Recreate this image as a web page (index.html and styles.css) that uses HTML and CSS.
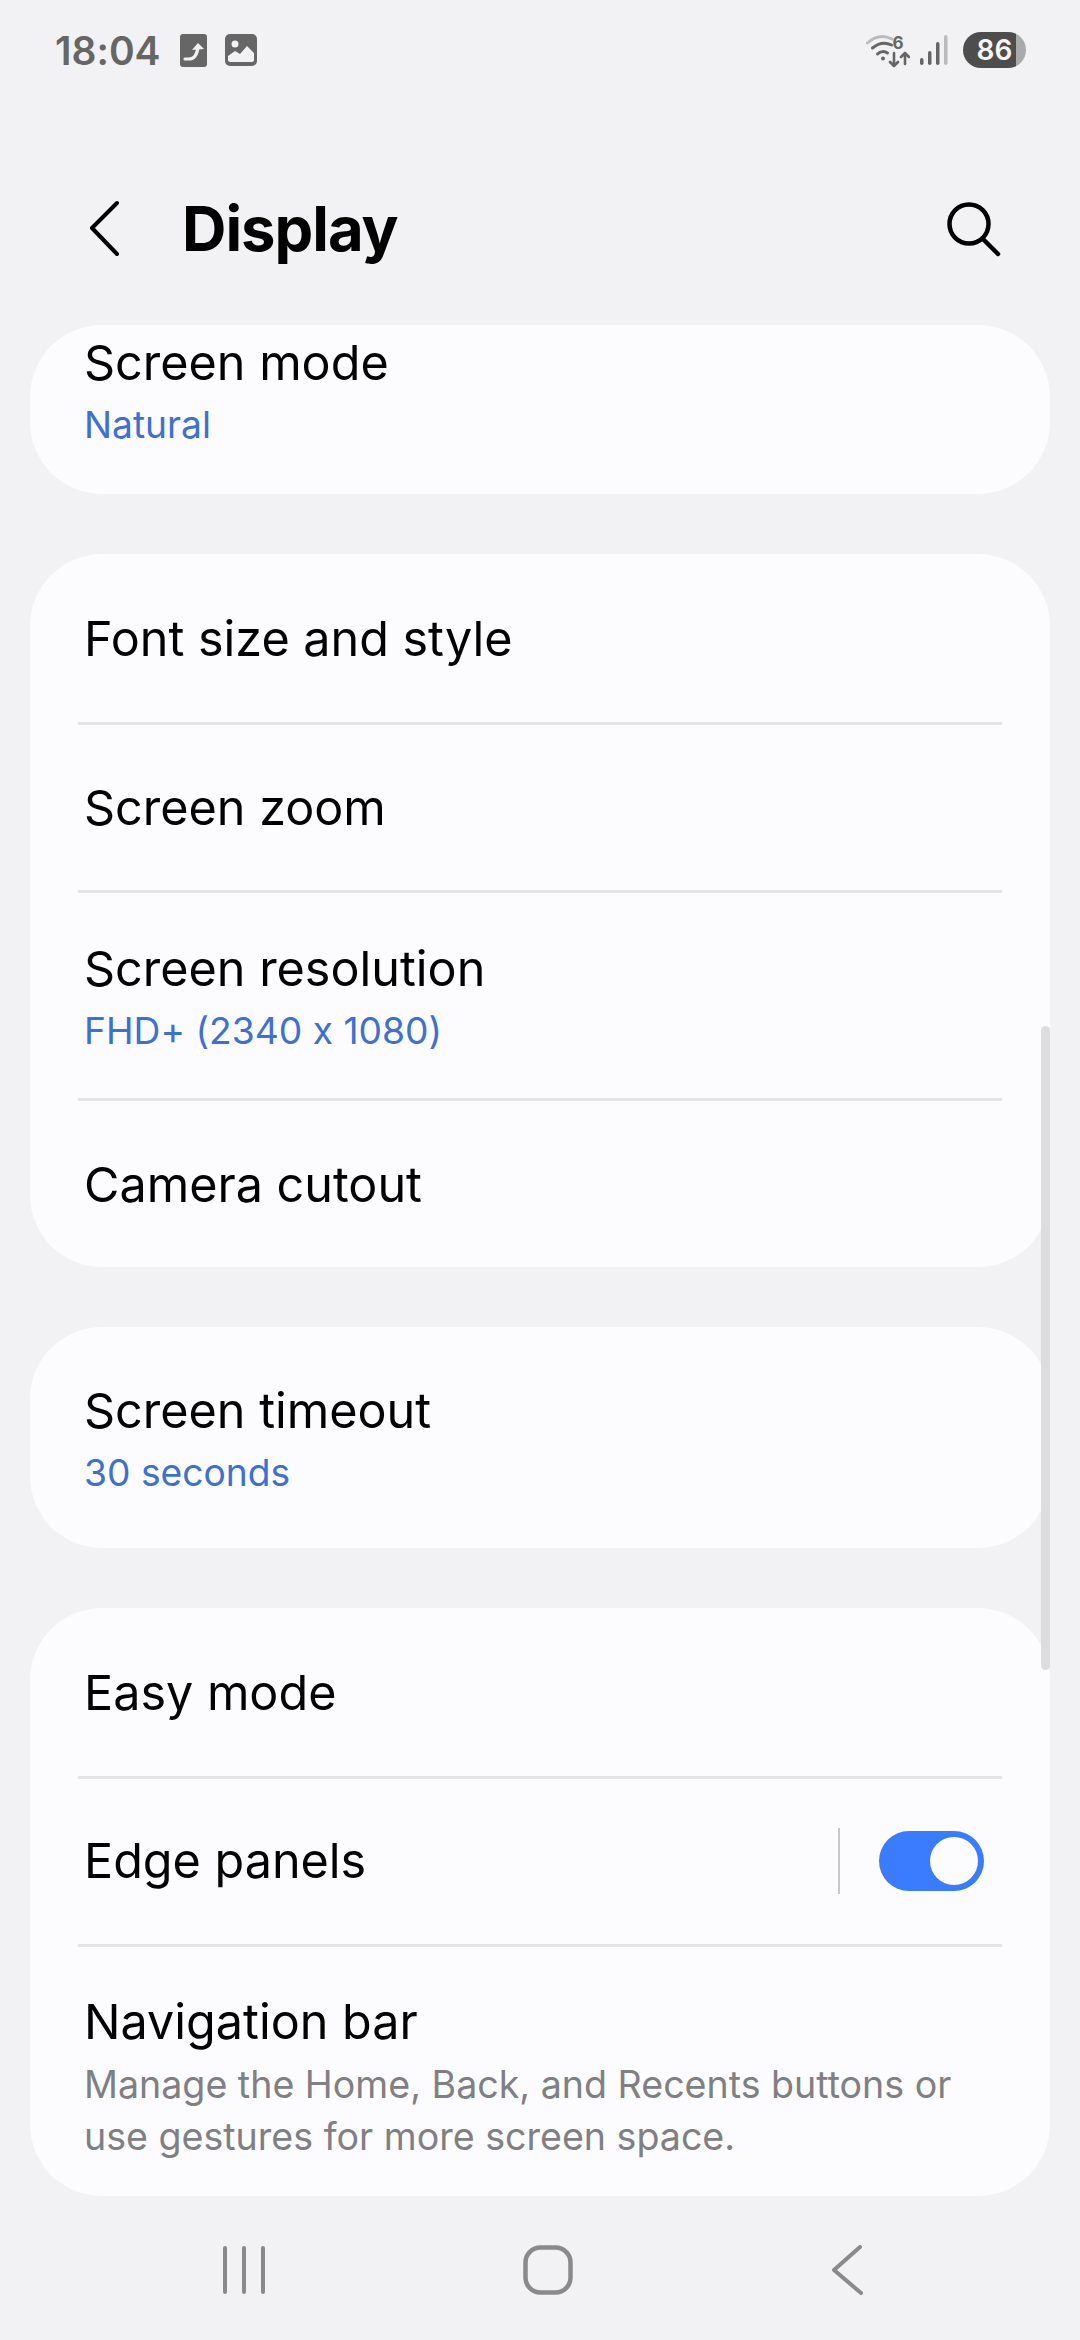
FILE: index.html
```html
<!DOCTYPE html>
<html>
<head>
    <title>Display</title>
    <link rel="stylesheet" href="styles.css">
</head>
<body>
    <div class="phone">
        <div class="status-bar">
            <span class="clock">18:04</span>
            <svg class="note-icon" width="27" height="33" viewBox="0 0 27 33">
                <rect width="27" height="33" rx="3" fill="#666"/>
                <path d="M5 25h4c5 0 8-3 9-12" fill="none" stroke="#f2f2f4" stroke-width="3.2" stroke-linecap="round"/>
                <path d="M12 16l6-7 6 6z" fill="#f2f2f4"/>
            </svg>
            <svg class="photo-icon" width="32" height="32" viewBox="0 0 32 32">
                <rect width="32" height="32" rx="5" fill="#666"/>
                <circle cx="10" cy="10" r="3.5" fill="#f2f2f4"/>
                <path d="M3 22l7-5 5 3 7-8 7 7v7c0 1-1 2-2 2H5c-1 0-2-1-2-2z" fill="#f2f2f4"/>
            </svg>
            <div class="status-right">
                <svg class="wifi-icon" width="44" height="36" viewBox="0 0 44 36">
                    <path d="M1.5 11C9 4 18 3 26 7" fill="none" stroke="#bbb" stroke-width="3" stroke-linecap="round"/>
                    <path d="M6.5 16c6-5 13-6 19-3" fill="none" stroke="#666" stroke-width="3" stroke-linecap="round"/>
                    <path d="M11.5 22c3-3 7-3 10-1" fill="none" stroke="#666" stroke-width="3" stroke-linecap="round"/>
                    <circle cx="17" cy="26.500" r="2" fill="#666"/>
                    <text x="26.500" y="17" class="wifi-six">6</text>
                    <path d="M28 21v13M24 30l4 4 4-4M39 32V21M35 25l4-4 4 4" fill="none" stroke="#666" stroke-width="2.6" stroke-linecap="round" stroke-linejoin="round"/>
                </svg>
                <svg class="signal-icon" width="28" height="30" viewBox="0 0 28 30">
                    <rect x="0" y="23" width="3.500" height="7" rx="1.700" fill="#666"/>
                    <rect x="8" y="16" width="3.500" height="14" rx="1.700" fill="#666"/>
                    <rect x="16" y="7" width="3.500" height="23" rx="1.700" fill="#666"/>
                    <rect x="24" y="0" width="3.500" height="30" rx="1.700" fill="#bbb"/>
                </svg>
                <div class="battery"><span class="battery-level">86</span></div>
            </div>
        </div>

        <div class="app-bar">
            <svg class="back-icon" width="32" height="58" viewBox="0 0 32 58">
                <path d="M28 3L3 28l25 26" fill="none" stroke="#000" stroke-width="4" stroke-linecap="round" stroke-linejoin="round"/>
            </svg>
            <h1>Display</h1>
            <svg class="search-icon" width="56" height="56" viewBox="0 0 56 56">
                <circle cx="23" cy="23" r="19.500" fill="none" stroke="#000" stroke-width="4.500"/>
                <path d="M37 38l15 15" fill="none" stroke="#000" stroke-width="4.500" stroke-linecap="round"/>
            </svg>
        </div>

        <div class="list">
            <div class="card cut-card">
                <div class="title">Screen mode</div>
                <div class="value">Natural</div>
            </div>

            <div class="card">
                <div class="row first"><div class="title">Font size and style</div></div>
                <div class="row"><div class="title">Screen zoom</div></div>
                <div class="row tall">
                    <div class="title">Screen resolution</div>
                    <div class="value">FHD+ (2340 x 1080)</div>
                </div>
                <div class="row last"><div class="title">Camera cutout</div></div>
            </div>

            <div class="card">
                <div class="row timeout">
                    <div class="title">Screen timeout</div>
                    <div class="value">30 seconds</div>
                </div>
            </div>

            <div class="card">
                <div class="row first"><div class="title">Easy mode</div></div>
                <div class="row switch-row">
                    <div class="title">Edge panels</div>
                    <div class="switch-sep"></div>
                    <div class="switch"><div class="thumb"></div></div>
                </div>
                <div class="row nav-row">
                    <div class="title">Navigation bar</div>
                    <div class="desc">Manage the Home, Back, and Recents buttons or use gestures for more screen space.</div>
                </div>
            </div>

            <div class="scrollbar"></div>
        </div>

        <div class="nav-bar">
            <svg width="42" height="48" viewBox="0 0 42 48">
                <path d="M2 2v44M21 2v44M40 2v44" fill="none" stroke="#8a8a8c" stroke-width="4" stroke-linecap="round"/>
            </svg>
            <svg width="50" height="50" viewBox="0 0 50 50">
                <rect x="2.500" y="2.500" width="45" height="45" rx="15" fill="none" stroke="#8a8a8c" stroke-width="4.500"/>
            </svg>
            <svg width="32" height="50" viewBox="0 0 32 50">
                <path d="M29 2L3 25l27 23" fill="none" stroke="#8a8a8c" stroke-width="4" stroke-linecap="round" stroke-linejoin="round"/>
            </svg>
        </div>
    </div>
</body>
</html>
```

FILE: styles.css
```css
html, body { margin: 0; padding: 0; background: #f2f2f4; }
body { font-family: Inter, "Noto Sans", sans-serif; color: #000; font-feature-settings: "calt" 0; }
.phone { width: 1080px; height: 2340px; display: flex; flex-direction: column; overflow: hidden; }

.status-bar { height: 100px; display: flex; align-items: center; padding: 0 54px 0 55px; box-sizing: border-box; flex-shrink: 0; }
.clock { font-size: 39px; font-weight: 600; color: #666; width: 125px; }
.photo-icon { margin-left: 18px; }
.status-right { margin-left: auto; display: flex; align-items: center; gap: 10px; }
.wifi-six { font-size: 17px; font-weight: 700; fill: #666; }
.battery { width: 63px; height: 36px; border-radius: 18px; background: linear-gradient(to right, #4d4d4d 53px, #aaa 53px); display: flex; align-items: center; justify-content: center; margin-left: 5px; }
.battery-level { color: #f5f5f5; font-size: 28px; font-weight: 600; }

.app-bar { height: 225px; display: flex; align-items: center; padding: 32px 78px 0 89px; box-sizing: border-box; flex-shrink: 0; }
.app-bar h1 { margin: 0 0 0 61px; font-size: 61.5px; font-weight: 700; letter-spacing: -1px; }
.search-icon { margin-left: auto; }

.list { position: relative; flex: 1; padding: 0 30px; display: flex; flex-direction: column; gap: 60px; }
.card { background: #fcfcff; border-radius: 72px; }
.cut-card { height: 169px; padding: 8px 0 0 54px; box-sizing: border-box; }

.row { height: 168px; margin: 0 48px; padding-left: 6px; border-bottom: 3px solid #e4e4e6; box-sizing: border-box; display: flex; flex-direction: column; justify-content: center; }
.row.first { height: 171px; padding-top: 2px; }
.row.tall { height: 208px; padding-top: 4px; }
.row.last { height: 166px; border-bottom: 0; padding-top: 2px; }
.row.timeout { height: 221px; border-bottom: 0; padding-top: 5px; }
.title { font-size: 48.5px; line-height: 60px; }
.value { font-size: 37.2px; line-height: 52px; color: #3e70d2; margin-top: 6px; }

.switch-row { flex-direction: row; align-items: center; padding-bottom: 2px; }
.switch-sep { width: 2px; height: 66px; background: #c8c8c8; margin-left: auto; }
.switch { width: 105px; height: 60px; margin: 0 18px 0 39px; background: #3b7cff; border-radius: 30px; display: flex; align-items: center; justify-content: flex-end; padding-right: 6px; box-sizing: border-box; }
.thumb { width: 48px; height: 48px; border-radius: 50%; background: #fcfcff; }

.nav-row { height: 249px; border-bottom: 0; justify-content: flex-start; padding-top: 45px; }
.desc { font-size: 37.6px; line-height: 52px; color: #808084; margin-top: 7px; }

.scrollbar { position: absolute; right: 30px; top: 701px; width: 9px; height: 644px; border-radius: 5px; background: #dcdcdf; }

.nav-bar { height: 144px; flex-shrink: 0; display: flex; align-items: center; padding: 4px 217px 0 223px; justify-content: space-between; box-sizing: border-box; }
```
